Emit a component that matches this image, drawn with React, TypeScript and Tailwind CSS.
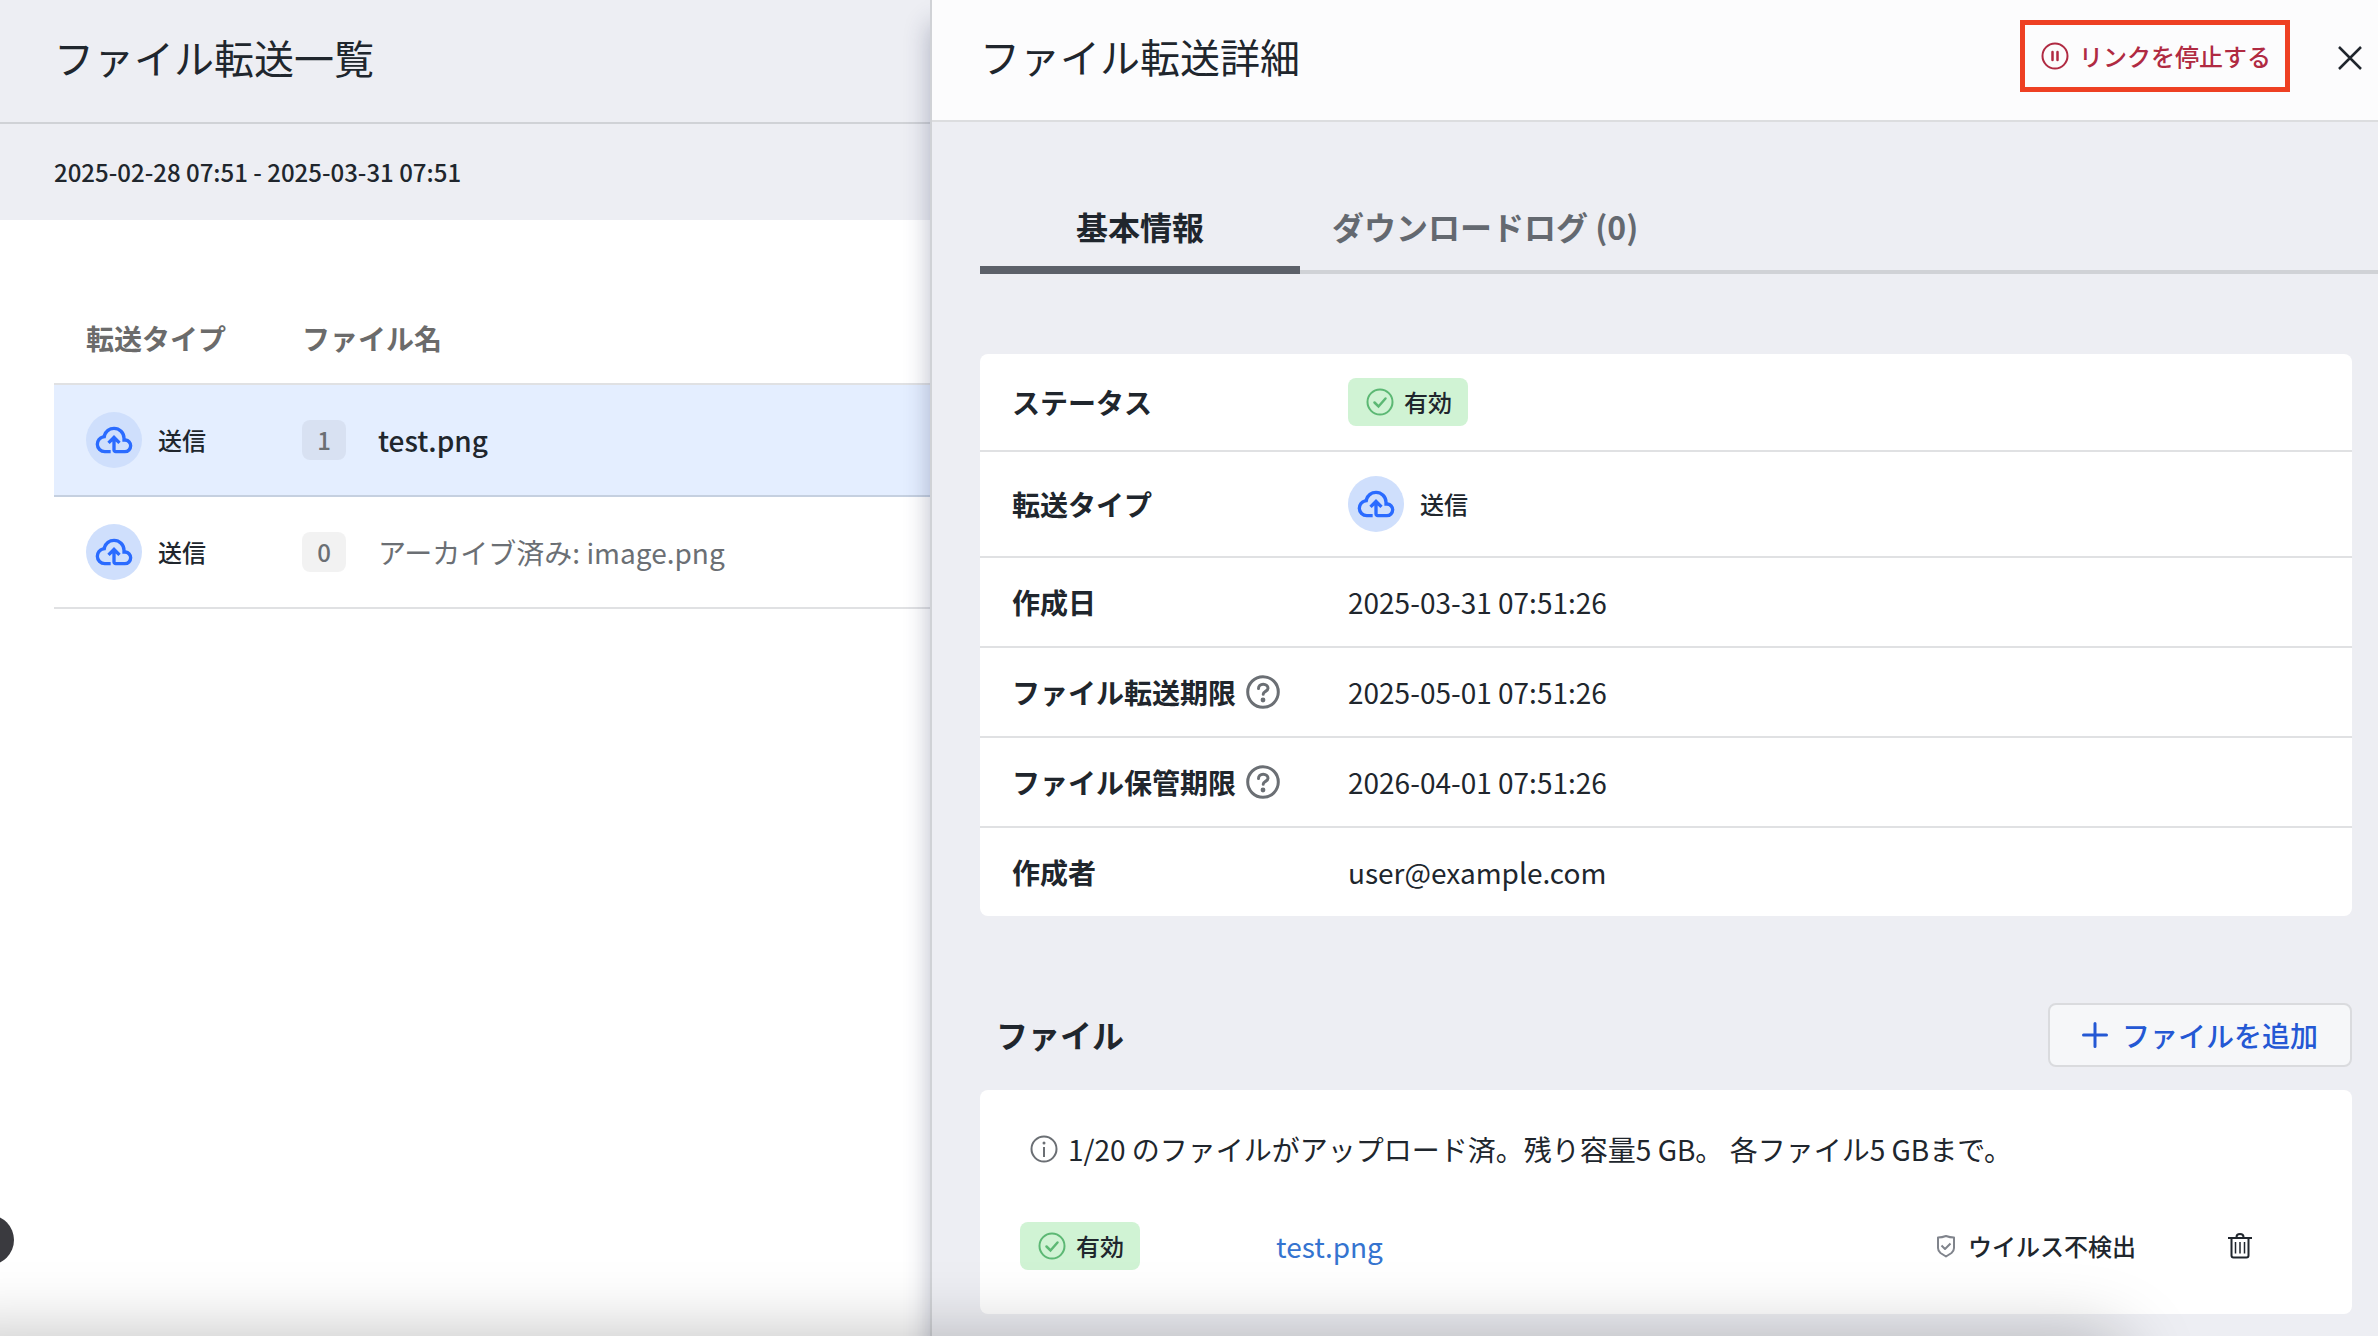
import React from "react";

const rows = [
  { count: 1, name: "test.png", active: true },
  { count: 0, name: "アーカイブ済み: image.png", active: false },
];

function CloudBadge() {
  return (
    <span className="flex size-14 shrink-0 items-center justify-center rounded-full bg-[#cfdffc]">
      <svg viewBox="0 0 24 24" className="size-10 fill-[#2a6bff]" aria-hidden="true">
        <path d="M10 20H6.5q-2.275 0-3.887-1.575T1 14.575q0-1.95 1.175-3.475T5.25 9.15q.625-2.3 2.5-3.725T12 4q2.925 0 4.963 2.037T19 11q1.725.2 2.863 1.488T23 15.5q0 1.875-1.312 3.188T18.5 20H13q-.825 0-1.412-.587T11 18v-5.15L9.4 14.4 8 13l4-4 4 4-1.4 1.4-1.6-1.55V18h5.5q1.05 0 1.775-.725T21 15.5t-.725-1.775T18.5 13H17v-2q0-2.075-1.463-3.538T12 6 8.463 7.463 7 11h-.5q-1.45 0-2.475 1.025T3 14.500t1.025 2.475T6.500 18H10z" />
      </svg>
    </span>
  );
}

function CheckCircle() {
  return (
    <svg
      viewBox="0 0 28 28"
      className="size-7 fill-none stroke-[#5cb874] stroke-2"
      strokeLinecap="round"
      aria-hidden="true"
    >
      <circle cx="14" cy="14" r="12.5" />
      <path d="M8.5 14.500l4 4L19.500 10.500" strokeWidth="2.500" />
    </svg>
  );
}

function StatusBadge() {
  return (
    <span className="inline-flex h-12 items-center gap-2.5 rounded-lg bg-[#d0f3d4] pr-4 pl-[18px] text-2xl font-medium">
      <CheckCircle />
      有効
    </span>
  );
}

function HelpButton({ label }: { label: string }) {
  return (
    <button type="button" aria-label={label} className="shrink-0">
      <svg
        viewBox="0 0 34 34"
        className="size-[34px] fill-none stroke-[#6b6f74] stroke-3"
        strokeLinecap="round"
        aria-hidden="true"
      >
        <circle cx="17" cy="17" r="15.3" />
        <path d="M12.500 13.500c0-2.600 2-4.300 4.700-4.300s4.800 1.700 4.800 4.100c0 3.200-4.800 3-4.800 5.900" />
        <circle cx="17" cy="25" r="2.400" className="fill-[#6b6f74] stroke-none" />
      </svg>
    </button>
  );
}

function DetailRow({
  label,
  help,
  size,
  children,
}: {
  label: string;
  help?: boolean;
  size: string;
  children: React.ReactNode;
}) {
  return (
    <div className={`flex items-center border-[#e0e1e3] px-8 not-last:border-b-2 ${size}`}>
      <dt className="flex w-[336px] shrink-0 items-center gap-2.5 font-bold">
        {label}
        {help && <HelpButton label={`${label}について`} />}
      </dt>
      <dd className="flex items-center">{children}</dd>
    </div>
  );
}

function ListPage() {
  return (
    <main className="w-[930px] shrink-0">
      <header className="flex h-31 items-center border-b-2 border-[#d0d2d6] bg-[#edeef3] pb-1 pl-[54px]">
        <h1 className="pb-1 text-[40px] leading-[60px]">ファイル転送一覧</h1>
      </header>
      <div className="flex h-24 items-center bg-[#edeef3] pl-[54px] text-2xl font-medium">
        2025-02-28 07:51 - 2025-03-31 07:51
      </div>
      <div className="pt-18 pl-[54px]">
        <table className="w-full table-fixed text-left">
          <colgroup>
            <col className="w-[216px]" />
            <col />
          </colgroup>
          <thead>
            <tr className="h-23 border-b-2 border-[#e0e1e3] text-[28px] text-[#6b6b6b]">
              <th className="pl-8 font-bold">転送タイプ</th>
              <th className="pl-8 font-bold">ファイル名</th>
            </tr>
          </thead>
          <tbody>
            {rows.map((r) => (
              <tr
                key={r.name}
                className={
                  r.active
                    ? "h-28 border-b-2 border-[#c5d0e0] bg-[#e4eeff]"
                    : "h-28 border-b-2 border-[#e0e1e3]"
                }
              >
                <td className="pl-8">
                  <div className="flex items-center gap-4 text-2xl font-medium">
                    <CloudBadge />
                    送信
                  </div>
                </td>
                <td className="pl-8">
                  <div className="flex items-center gap-8">
                    <span className="flex h-10 w-11 items-center justify-center rounded-lg bg-black/5 text-2xl font-medium text-[#6b6f74]">
                      {r.count}
                    </span>
                    <span className={r.active ? "text-[28px] font-medium" : "text-[28px] text-[#6b6f74]"}>
                      {r.name}
                    </span>
                  </div>
                </td>
              </tr>
            ))}
          </tbody>
        </table>
      </div>
    </main>
  );
}

function DetailDrawer() {
  return (
    <aside
      aria-label="ファイル転送詳細"
      className="relative min-w-0 flex-1 border-l-2 border-[#d0d2d6] bg-[#edeef3] shadow-[0_24px_24px_rgba(40,50,90,0.32)]"
    >
      <header className="flex h-[122px] items-center justify-between border-b-2 border-[#dcdddf] bg-[#fcfcfd] pb-2 pl-12">
        <h2 className="text-[40px] leading-[60px]">ファイル転送詳細</h2>
        <div className="flex items-center gap-8">
          <button
            type="button"
            className="flex h-[72px] items-center gap-2.5 border-[5px] border-[#ee4023] pr-3.5 pl-4 text-2xl font-medium text-[#b02a42]"
          >
            <svg viewBox="0 0 28 28" className="size-7 fill-none stroke-current" aria-hidden="true">
              <circle cx="14" cy="14" r="12.5" strokeWidth="2" />
              <path d="M11.500 10v8M16.500 10v8" strokeWidth="2.500" strokeLinecap="round" />
            </svg>
            リンクを停止する
          </button>
          <button type="button" aria-label="閉じる" className="flex w-14 items-center justify-center pt-1">
            <svg viewBox="0 0 24 24" className="size-6 fill-none stroke-[#20262d]" strokeWidth="2.500" aria-hidden="true">
              <path d="M1 1l22 22M23 1L1 23" />
            </svg>
          </button>
        </div>
      </header>

      <div className="pt-16 pl-12">
        <div role="tablist" className="flex h-[88px] border-b-4 border-[#d0d2d6] text-[32px] font-bold">
          <button
            type="button"
            role="tab"
            aria-selected="true"
            className="-mb-1 w-80 border-b-8 border-[#5c6069]"
          >
            基本情報
          </button>
          <button type="button" role="tab" aria-selected="false" className="px-8 pb-1 text-[#646970]">
            ダウンロードログ (0)
          </button>
        </div>
      </div>

      <div className="pt-20 pr-[26px] pl-12">
        <dl className="rounded-lg bg-white text-[28px]">
          <DetailRow label="ステータス" size="h-[98px]">
            <StatusBadge />
          </DetailRow>
          <DetailRow label="転送タイプ" size="h-[106px]">
            <span className="flex items-center gap-4 text-2xl font-medium">
              <CloudBadge />
              送信
            </span>
          </DetailRow>
          <DetailRow label="作成日" size="h-[90px]">
            2025-03-31 07:51:26
          </DetailRow>
          <DetailRow label="ファイル転送期限" help size="h-[90px]">
            2025-05-01 07:51:26
          </DetailRow>
          <DetailRow label="ファイル保管期限" help size="h-[90px]">
            2026-04-01 07:51:26
          </DetailRow>
          <DetailRow label="作成者" size="h-[88px]">
            user@example.com
          </DetailRow>
        </dl>

        <div className="mt-[87px] flex items-center justify-between">
          <h3 className="pb-0.5 pl-4 text-[32px] font-bold">ファイル</h3>
          <button
            type="button"
            className="flex h-16 items-center gap-3.5 rounded-lg border-2 border-[#dadbde] bg-[#f6f7f9] px-8 text-[28px] font-medium text-[#2458d4]"
          >
            <svg
              viewBox="0 0 26 26"
              className="size-[26px] fill-none stroke-current stroke-3"
              strokeLinecap="round"
              aria-hidden="true"
            >
              <path d="M13 1.500v23M1.500 13h23" />
            </svg>
            ファイルを追加
          </button>
        </div>

        <section className="mt-[23px] h-56 rounded-lg bg-white pt-[38px] pr-25 pl-10">
          <p className="flex items-center gap-2.5 pl-2.5 text-[28px] leading-[42px]">
            <svg viewBox="0 0 28 28" className="size-7 fill-none stroke-[#6b6f74] stroke-2" aria-hidden="true">
              <circle cx="14" cy="14" r="12.5" />
              <path d="M14 12v10" />
              <circle cx="14" cy="8" r="1.500" className="fill-[#6b6f74] stroke-none" />
            </svg>
            1/20 のファイルがアップロード済。残り容量5 GB。 各ファイル5 GBまで。
          </p>
          <div className="mt-[52px] flex items-center">
            <div className="w-64">
              <StatusBadge />
            </div>
            <a href="#test" className="flex-1 text-[28px] text-[#3574d0]">
              test.png
            </a>
            <span className="flex items-center gap-3 pr-23 text-2xl font-medium">
              <svg
                viewBox="0 0 20 24"
                className="h-6 w-5 fill-none stroke-[#80848c] stroke-2"
                strokeLinejoin="round"
                aria-hidden="true"
              >
                <path d="M10 2q4 1.500 8 1.500V14q0 3-2.500 5L10 22.500 4.500 19Q2 17 2 14V3.500Q6 3.500 10 2z" />
                <path d="M5.500 11.500l3.500 3.500 5.500-5.500" />
              </svg>
              ウイルス不検出
            </span>
            <button type="button" aria-label="削除">
              <svg viewBox="0 0 24 26" className="h-[26px] w-6 fill-none stroke-[#20262d] stroke-2" aria-hidden="true">
                <path d="M0 5h24M8.500 5V4q0-3 3.500-3t3.500 3v1M3.500 5v17.500q0 2 2 2h13q2 0 2-2V5" />
                <path d="M7.500 9v11.500M12 9v11.500M16.500 9v11.500" strokeWidth="1.500" />
              </svg>
            </button>
          </div>
        </section>
      </div>
    </aside>
  );
}

export default function App() {
  return (
    <div
      lang="ja"
      className="relative flex h-screen overflow-hidden bg-white font-['Noto_Sans_CJK_JP',sans-serif] text-[#20262d]"
    >
      <ListPage />
      <DetailDrawer />
      <div className="pointer-events-none absolute bottom-[71px] -left-9 size-[50px] rounded-full bg-[#3a3a3f]" />
      <div className="pointer-events-none absolute -bottom-20 -left-20 h-20 w-[2210px] rounded-full shadow-[0_0_70px_rgba(0,0,0,0.26)]" />
    </div>
  );
}
